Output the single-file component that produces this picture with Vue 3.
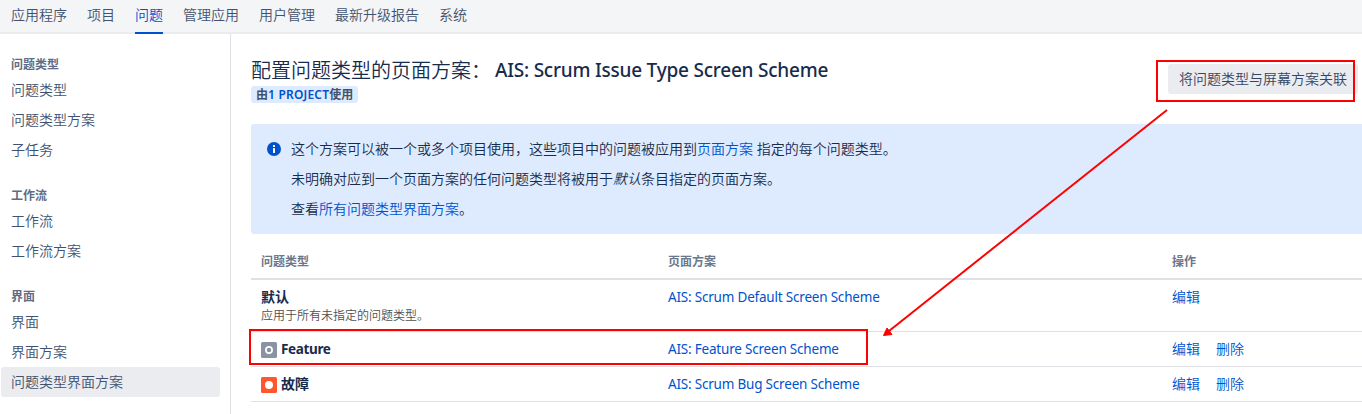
<script setup>
const tabs = ['应用程序', '项目', '问题', '管理应用', '用户管理', '最新升级报告', '系统']
const groups = [
  { title: '问题类型', items: ['问题类型', '问题类型方案', '子任务'] },
  { title: '工作流', items: ['工作流', '工作流方案'] },
  { title: '界面', items: ['界面', '界面方案', '问题类型界面方案'] }
]
const rows = [
  { name: '默认', note: '应用于所有未指定的问题类型。', scheme: 'AIS: Scrum Default Screen Scheme', actions: ['编辑'] },
  { name: 'Feature', icon: 'feature', scheme: 'AIS: Feature Screen Scheme', actions: ['编辑', '删除'] },
  { name: '故障', icon: 'bug', scheme: 'AIS: Scrum Bug Screen Scheme', actions: ['编辑', '删除'] }
]
</script>

<template>
  <div class="page">
    <nav class="tabs">
      <a v-for="t in tabs" :key="t" class="tab" :class="{ active: t === '问题' }">{{ t }}</a>
    </nav>
    <div class="body">
      <aside class="side">
        <section v-for="g in groups" :key="g.title" class="group">
          <h2>{{ g.title }}</h2>
          <a v-for="i in g.items" :key="i" class="item" :class="{ selected: i === '问题类型界面方案' }">{{ i }}</a>
        </section>
      </aside>
      <main class="main">
        <header class="head">
          <div>
            <h1><span class="lead">配置问题类型的页面方案：</span><span class="scheme-name">AIS: Scrum Issue Type Screen Scheme</span></h1>
            <div class="badge">由<a>1 PROJECT</a>使用</div>
          </div>
          <button class="assoc">将问题类型与屏幕方案关联</button>
        </header>
        <div class="info">
          <svg class="info-icon" width="14" height="14" viewBox="0 0 14 14">
            <circle cx="7" cy="7" r="7" fill="#0052cc" />
            <rect x="6" y="3" width="2" height="2" rx=".6" fill="#fff" />
            <rect x="6" y="6" width="2" height="5" rx=".6" fill="#fff" />
          </svg>
          <div>
            <p>这个方案可以被一个或多个项目使用，这些项目中的问题被应用到<a>页面方案</a> 指定的每个问题类型。</p>
            <p>未明确对应到一个页面方案的任何问题类型将被用于<em>默认</em>条目指定的页面方案。</p>
            <p>查看<a>所有问题类型界面方案</a>。</p>
          </div>
        </div>
        <div class="table">
          <div class="row thead"><span>问题类型</span><span>页面方案</span><span>操作</span></div>
          <div v-for="r in rows" :key="r.name" class="row" :class="{ tall: r.note }">
            <div>
              <div class="name">
                <svg v-if="r.icon" width="16" height="16" viewBox="0 0 16 16">
                  <rect width="16" height="16" rx="1.6" :fill="r.icon === 'bug' ? '#ff5630' : '#8993a4'" />
                  <circle v-if="r.icon === 'bug'" cx="8" cy="8" r="4" fill="#fff" />
                  <circle v-else cx="8" cy="8" r="3.1" fill="none" stroke="#fff" stroke-width="1.7" />
                </svg>
                <strong :class="{ latin: r.icon === 'feature' }">{{ r.name }}</strong>
              </div>
              <div v-if="r.note" class="note">{{ r.note }}</div>
            </div>
            <div><a class="scheme">{{ r.scheme }}</a></div>
            <div class="actions"><a v-for="a in r.actions" :key="a">{{ a }}</a></div>
          </div>
        </div>
      </main>
    </div>
    <svg class="marks" width="1362" height="414" viewBox="0 0 1362 414">
      <rect x="1157" y="61" width="197" height="40" />
      <rect x="250" y="330" width="617" height="34" />
      <path d="M1167 110 L889 331" />
      <path class="tip" d="M883.500 335.500 L887 328 L892 334.500 Z" />
    </svg>
  </div>
</template>

<style>
body { margin: 0; overflow: hidden; background: #fff; }
</style>

<style scoped>
.page {
  position: relative;
  width: 1362px;
  height: 414px;
  overflow: hidden;
  font: 350 14px/20px "Noto Sans", "Noto Sans CJK SC", sans-serif;
  color: #172b4d;
}
a { color: #0052cc; }
.tabs {
  display: flex;
  gap: 20px;
  box-sizing: border-box;
  height: 34px;
  padding-left: 11px;
  background: #f4f5f7;
  border-bottom: 2px solid #ebecf0;
}
.tab { height: 32px; line-height: 30px; color: #42526e; }
.tab.active { color: #0052cc; border-bottom: 2px solid #0052cc; }
.body { display: flex; height: 380px; }
.side {
  box-sizing: border-box;
  width: 231px;
  padding: 21px 10px 0 1px;
  border-right: 1px solid #dfe1e6;
}
.group { margin-bottom: 21px; }
.group h2 { margin: 0; padding-left: 10px; font-size: 12px; line-height: 20px; font-weight: 600; color: #5e6c84; }
.item { display: block; padding-left: 10px; height: 30px; line-height: 30px; color: #42526e; border-radius: 3px; }
.selected { background: #ebecf0; }
.main { flex: 1; padding-left: 20px; min-width: 0; }
.head { display: flex; justify-content: space-between; height: 90px; }
.head > div { padding-top: 23px; }
h1 { margin: 0; font-size: 20px; line-height: 28px; white-space: nowrap; display: flex; }
.lead { font-weight: 350; }
.scheme-name { font-size: 19px; line-height: 26px; font-weight: 500; letter-spacing: -0.22px; margin-left: 4px; }
.badge {
  display: inline-block;
  height: 17px;
  margin-top: 1px;
  padding: 0 5px;
  border-radius: 3px;
  background: #deebff;
  color: #42526e;
  font-size: 12px;
  line-height: 17px;
  font-weight: 600;
  vertical-align: top;
}
.badge a { letter-spacing: 0.2px; }
.assoc {
  width: 190px;
  height: 30px;
  margin: 30px 4px 0 0;
  padding: 0;
  border: 0;
  border-radius: 3px;
  background: #ebecf0;
  color: #344563;
  font: 350 14px/30px "Noto Sans", "Noto Sans CJK SC", sans-serif;
}
.info {
  display: flex;
  gap: 10px;
  box-sizing: border-box;
  height: 110px;
  padding: 15px 0 0 16px;
  background: #deebff;
  border-radius: 3px 0 0 3px;
}
.info-icon { margin-top: 3px; }
.info p { margin: 0 0 10px; height: 20px; white-space: nowrap; }
.row {
  display: grid;
  grid-template-columns: 407px 504px 1fr;
  box-sizing: border-box;
  height: 35px;
  padding: 7px 0 0 10px;
  border-bottom: 1px solid #dfe1e6;
  white-space: nowrap;
}
.thead { height: 46px; padding-top: 18px; border-bottom-width: 2px; font-size: 12px; font-weight: 600; color: #6b778c; }
.row.tall { height: 52px; }
.name { display: flex; gap: 4px; height: 20px; }
.name svg { margin-top: 3px; }
.name strong { font-weight: 700; }
.name .latin { font-size: 13.5px; letter-spacing: -0.35px; }
.scheme { font-size: 13.5px; font-weight: 400; letter-spacing: -0.2px; }
.note { font-size: 12px; line-height: 18px; color: #505050; }
.actions { display: flex; gap: 16px; }
.marks { position: absolute; inset: 0; fill: none; stroke: #f00; stroke-width: 2; }
.tip { fill: #f00; stroke-width: 1; }
</style>
